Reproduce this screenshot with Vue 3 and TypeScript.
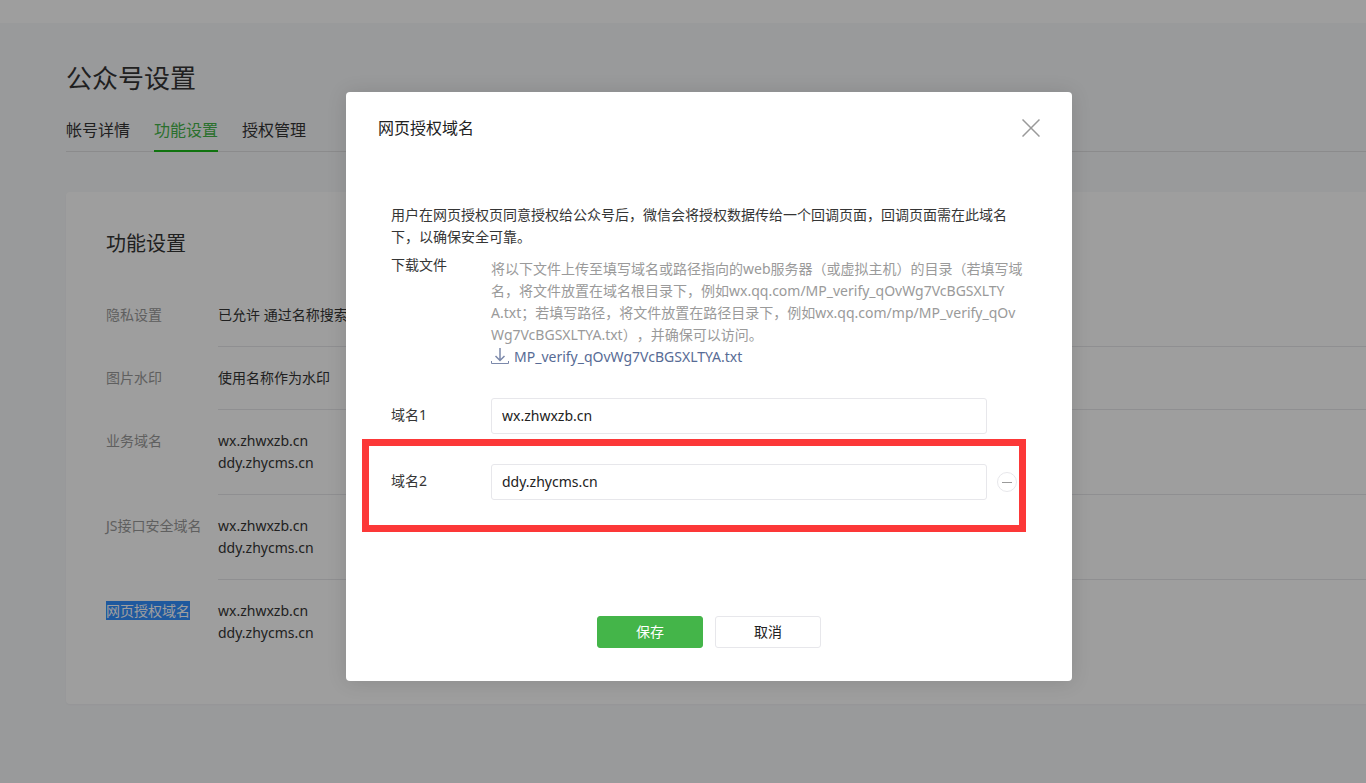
<script setup lang="ts">
import { ref } from 'vue'

interface Setting {
  label: string
  values: string[]
  selected?: boolean
}

const tabs = ['帐号详情', '功能设置', '授权管理']
const activeTab = ref(1)

const settings: Setting[] = [
  { label: '隐私设置', values: ['已允许 通过名称搜索到本帐号'] },
  { label: '图片水印', values: ['使用名称作为水印'] },
  { label: '业务域名', values: ['wx.zhwxzb.cn', 'ddy.zhycms.cn'] },
  { label: 'JS接口安全域名', values: ['wx.zhwxzb.cn', 'ddy.zhycms.cn'] },
  { label: '网页授权域名', values: ['wx.zhwxzb.cn', 'ddy.zhycms.cn'], selected: true },
]

const hintLines = [
  '将以下文件上传至填写域名或路径指向的web服务器（或虚拟主机）的目录（若填写域',
  '名，将文件放置在域名根目录下，例如wx.qq.com/MP_verify_qOvWg7VcBGSXLTY',
  'A.txt；若填写路径，将文件放置在路径目录下，例如wx.qq.com/mp/MP_verify_qOv',
  'Wg7VcBGSXLTYA.txt），并确保可以访问。',
]

const domain1 = ref('wx.zhwxzb.cn')
const domain2 = ref('ddy.zhycms.cn')
</script>

<template>
  <div class="page">
    <header class="topbar"></header>
    <main class="main">
      <h1 class="title">公众号设置</h1>
      <nav class="tabs">
        <a
          v-for="(tab, i) in tabs"
          :key="tab"
          href="#"
          class="tab"
          :class="{ active: i === activeTab }"
          @click.prevent="activeTab = i"
          >{{ tab }}</a
        >
      </nav>
      <section class="card">
        <h2 class="card-title">功能设置</h2>
        <dl class="settings">
          <div v-for="item in settings" :key="item.label" class="setting">
            <dt class="setting-label">
              <span :class="{ selected: item.selected }">{{ item.label }}</span>
            </dt>
            <dd class="setting-value">
              <div v-for="value in item.values" :key="value">{{ value }}</div>
            </dd>
          </div>
        </dl>
      </section>
    </main>

    <div class="mask">
      <div class="dialog" role="dialog" aria-labelledby="dialog-title">
        <div class="dialog-head">
          <h3 id="dialog-title" class="dialog-title">网页授权域名</h3>
          <button type="button" class="close" aria-label="关闭">
            <svg width="18" height="18" viewBox="0 0 18 18" fill="none" stroke="#9a9a9a" stroke-width="1.5">
              <path d="M0.5 0.5L17.5 17.5M17.5 0.5L0.5 17.5" />
            </svg>
          </button>
        </div>
        <form class="dialog-body" @submit.prevent>
          <p class="intro">
            用户在网页授权页同意授权给公众号后，微信会将授权数据传给一个回调页面，回调页面需在此域名下，以确保安全可靠。
          </p>
          <div class="row">
            <div class="label">下载文件</div>
            <div class="download">
              <p class="hint">
                <span v-for="line in hintLines" :key="line" class="hint-line">{{ line }}</span>
              </p>
              <a href="#" class="file">
                <svg width="18" height="18" viewBox="0 0 18 18" fill="none" stroke="#7c89ab">
                  <path d="M9 0V12M4.5 8L9 12.5L13.5 8" stroke-width="1.5" />
                  <path d="M0.5 13V15.5H17.5V13" />
                </svg>
                <span>MP_verify_qOvWg7VcBGSXLTYA.txt</span>
              </a>
            </div>
          </div>
          <div class="row field">
            <label class="label" for="domain1">域名1</label>
            <input id="domain1" v-model="domain1" class="input" type="text" />
          </div>
          <div class="row field marked">
            <label class="label" for="domain2">域名2</label>
            <input id="domain2" v-model="domain2" class="input" type="text" />
            <button type="button" class="remove" aria-label="删除">
              <svg width="20" height="20" viewBox="0 0 20 20" fill="none">
                <circle cx="10" cy="10" r="9.5" stroke="#e7e7eb" />
                <path d="M5 10.5H15" stroke="#9a9a9a" />
              </svg>
            </button>
          </div>
          <div class="actions">
            <button type="submit" class="btn primary">保存</button>
            <button type="button" class="btn">取消</button>
          </div>
        </form>
      </div>
    </div>
  </div>
</template>

<style>
body {
  margin: 0;
  background: #f7f8fa;
}
</style>

<style scoped>
.page {
  min-height: 100vh;
  overflow: hidden;
  position: relative;
  box-sizing: border-box;
  background: #f7f8fa;
  color: #353535;
  font-family: 'Noto Sans', 'Noto Sans CJK SC', sans-serif;
  font-size: 14px;
  line-height: 22px;
  text-spacing-trim: space-all;
}
h1, h2, h3, p, dl, dd {
  margin: 0;
  font-weight: 400;
}
button, input {
  font: inherit;
  color: inherit;
  margin: 0;
  padding: 0;
  box-sizing: border-box;
}
button {
  border: 0;
  background: none;
  cursor: pointer;
}
a {
  color: inherit;
  text-decoration: none;
}
svg {
  display: block;
}
.topbar {
  height: 23px;
  background: #fff;
}
.main {
  padding: 36px 0 78px 66px;
}
.title {
  font-size: 26px;
  line-height: 38px;
}
.tabs {
  display: flex;
  gap: 24px;
  margin-top: 12px;
  height: 42px;
  border-bottom: 1px solid #e0e1e2;
}
.tab {
  height: 41px;
  font-size: 16px;
  line-height: 42px;
  border-bottom: 2px solid transparent;
}
.tab.active {
  color: #44b549;
  border-bottom-color: #1aba19;
}
.card {
  margin-top: 40px;
  padding: 36px 0 60px 40px;
  background: #fff;
  border-radius: 4px 0 0 4px;
  box-shadow: 0 1px 2px rgba(0, 0, 0, 0.03);
}
.card-title {
  font-size: 20px;
  line-height: 32px;
  margin-bottom: 24px;
}
.setting {
  display: flex;
}
.setting-label {
  width: 112px;
  flex: none;
  padding-top: 20px;
  color: #9a9a9a;
}
.setting-value {
  flex: 1;
  padding: 20px 0;
  border-bottom: 1px solid #e7e7eb;
}
.setting:last-child .setting-value {
  border-bottom: 0;
  padding-bottom: 0;
}
.selected {
  display: inline-block;
  line-height: 19px;
  color: #fff;
  background: #3390ff;
}
.mask {
  position: absolute;
  inset: 0;
  display: flex;
  justify-content: center;
  align-items: flex-start;
  padding: 92px 0 0 52px;
  background: rgba(0, 0, 0, 0.38);
}
.dialog {
  width: 726px;
  background: #fff;
  border-radius: 4px;
  box-shadow: 0 1px 20px rgba(0, 0, 0, 0.12);
}
.dialog-head {
  display: flex;
  justify-content: space-between;
  align-items: center;
  height: 72px;
  padding: 0 32px;
}
.dialog-title {
  font-size: 16px;
  line-height: 24px;
  color: #222;
}
.dialog-body {
  padding: 40px 45px 33px;
}
.intro {
  margin-bottom: 6px;
}
.row {
  display: flex;
}
.label {
  width: 100px;
  flex: none;
}
.download {
  padding-top: 4px;
}
.hint {
  color: #9a9a9a;
}
.hint-line {
  display: block;
  white-space: nowrap;
}
.file {
  display: flex;
  align-items: center;
  gap: 5px;
  color: #576b95;
}
.field {
  margin-top: 30px;
  position: relative;
}
.field .label {
  line-height: 34px;
}
.input {
  width: 496px;
  height: 36px;
  padding: 0 10px 2px;
  border: 1px solid #e7e7eb;
  border-radius: 3px;
  background: #fff;
  color: #222;
  outline: 0;
}
.remove {
  align-self: center;
  margin-left: 10px;
}
.marked::after {
  content: '';
  position: absolute;
  inset: -25px 1px -32px -29px;
  border: 7px solid #fc3838;
  pointer-events: none;
}
.actions {
  display: flex;
  justify-content: center;
  gap: 12px;
  margin-top: 116px;
}
.btn {
  width: 106px;
  height: 32px;
  border: 1px solid #e7e7eb;
  border-radius: 3px;
  color: #222;
}
.btn.primary {
  border-color: #44b549;
  background: #44b549;
  color: #fff;
}
</style>
